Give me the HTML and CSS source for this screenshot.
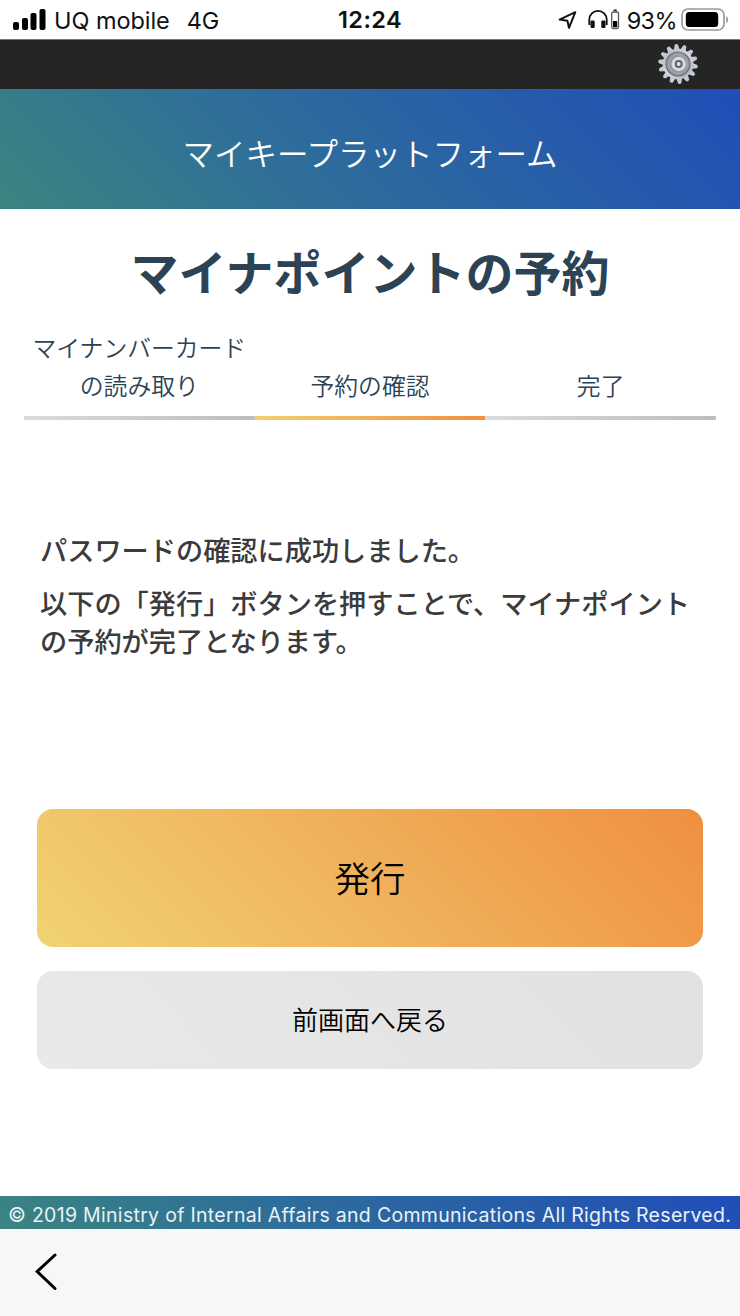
FILE: index.html
```html
<!DOCTYPE html>
<html lang="ja">
<head>
<meta charset="utf-8">
<meta name="viewport" content="width=device-width">
<title>マイナポイントの予約</title>
<link rel="stylesheet" href="styles.css">
</head>
<body>
<div class="screen">
  <div class="status">
    <div class="status-left">
      <svg class="signal" width="33" height="22" viewBox="0 0 33 22"><rect x="0" y="13" width="6" height="8" rx="2"/><rect x="9" y="9" width="6" height="12" rx="2"/><rect x="17.500" y="4" width="6" height="17" rx="2"/><rect x="26.500" y="0" width="6" height="21" rx="2"/></svg>
      <span class="carrier">UQ mobile</span>
      <span class="network">4G</span>
    </div>
    <div class="time">12:24</div>
    <div class="status-right">
      <svg class="location" width="20" height="20" viewBox="0 0 20 20"><path d="M1.600 9.600 17.300 2.200 11 17.800 9.400 10.800Z" fill="none" stroke="#111" stroke-width="2" stroke-linejoin="round"/></svg>
      <svg class="headphones" width="32" height="22" viewBox="0 0 32 22"><path d="M1.300 16V10.500a8.700 8.700 0 0 1 17.400 0V16" fill="none" stroke="#111" stroke-width="1.800"/><rect x="2.500" y="11.500" width="4.200" height="7.500" rx="1.300" fill="#111"/><rect x="13.300" y="11.500" width="4.200" height="7.500" rx="1.300" fill="#111"/><rect x="23.700" y="3" width="6.800" height="16.500" rx="1.500" fill="none" stroke="#555" stroke-width="1.300"/><path d="M25.500 1.300h3.200" stroke="#333" stroke-width="1.800"/><rect x="25" y="12" width="4.200" height="6.200" fill="#000"/></svg>
      <span class="percent">93%</span>
      <svg class="battery" width="48" height="24" viewBox="0 0 48 24"><rect x="1" y="1" width="42" height="21" rx="6" fill="#fff" stroke="#999" stroke-width="1.700"/><rect x="4.800" y="4" width="32.400" height="15" rx="3.500"/><path d="M45.200 8q2 1 2 3.500t-2 3.500z" fill="#999"/></svg>
    </div>
  </div>
  <div class="toolbar">
    <svg class="gear" width="42" height="42" viewBox="-21 -21 42 42">
      <defs>
        <linearGradient id="metal" x1="0" y1="0" x2="1" y2="1"><stop offset="0" stop-color="#aeb3bb"/><stop offset=".5" stop-color="#d5d9e1"/><stop offset="1" stop-color="#a9adb5"/></linearGradient>
        <path id="tooth" d="M-3.200-13-1.600-19.400Q0-20.500 1.600-19.400L3.200-13Z"/>
      </defs>
      <g fill="#c6cad2">
        <use href="#tooth" transform="rotate(-5)"/><use href="#tooth" transform="rotate(20.700)"/><use href="#tooth" transform="rotate(46.400)"/><use href="#tooth" transform="rotate(72.100)"/><use href="#tooth" transform="rotate(97.900)"/><use href="#tooth" transform="rotate(123.600)"/><use href="#tooth" transform="rotate(149.300)"/><use href="#tooth" transform="rotate(175)"/><use href="#tooth" transform="rotate(200.700)"/><use href="#tooth" transform="rotate(226.400)"/><use href="#tooth" transform="rotate(252.100)"/><use href="#tooth" transform="rotate(277.900)"/><use href="#tooth" transform="rotate(303.600)"/><use href="#tooth" transform="rotate(329.300)"/>
      </g>
      <circle r="15.300" fill="url(#metal)"/>
      <circle r="12" fill="#92969d" stroke="#6c7077" stroke-width="1.200"/>
      <circle r="9.500" fill="none" stroke="#a9aeb5" stroke-width="1"/>
      <circle cx=".7" r="7.200" fill="#d6dae1"/>
      <circle cx=".7" r="4" fill="#5f6369"/>
      <circle cx=".7" r="2" fill="#e4e6ea"/>
    </svg>
  </div>
  <header class="banner">マイキープラットフォーム</header>
  <main class="content">
    <h1 class="title">マイナポイントの予約</h1>
    <ol class="steps">
      <li class="step"><span>マイナンバーカード<br>の読み取り</span></li>
      <li class="step active"><span>予約の確認</span></li>
      <li class="step"><span>完了</span></li>
    </ol>
    <div class="message">
      <p>パスワードの確認に成功しました。</p>
      <p>以下の「発行」ボタンを押すことで、マイナポイント<br>の予約が完了となります。</p>
    </div>
    <div class="actions">
      <button class="button primary">発行</button>
      <button class="button secondary">前画面へ戻る</button>
    </div>
  </main>
  <footer class="copyright">© 2019 Ministry of Internal Affairs and Communications All Rights Reserved.</footer>
  <nav class="browser-bar">
    <svg width="22" height="38" viewBox="0 0 22 38"><path d="M20 2 2.200 18.500 20 35.500" fill="none" stroke="#000" stroke-width="3" stroke-linecap="round" stroke-linejoin="miter"/></svg>
  </nav>
</div>
</body>
</html>
```
FILE: styles.css
```css
* { box-sizing: border-box; }
body {
  margin: 0;
  background: #fff;
  font-family: "Noto Sans CJK JP", sans-serif;
  color: #2c4356;
}
.screen { display: flex; flex-direction: column; height: 1316px; width: 740px; overflow: hidden; }
.status {
  height: 39px;
  display: grid;
  grid-template-columns: 1fr auto 1fr;
  align-items: center;
  font: 23.500px/39px Inter, sans-serif;
  color: #111;
  white-space: nowrap;
}
.status-left, .status-right { display: flex; align-items: center; height: 39px; padding-top: 1px; }
.status-left { padding-left: 13px; }
.carrier { margin-left: 8px; letter-spacing: -.05px; }
.network { margin-left: 17px; letter-spacing: -.3px; }
.time { font-weight: 600; letter-spacing: .4px; }
.status-right { justify-content: flex-end; padding-right: 11px; }
.headphones { margin-left: 10px; }
.percent { margin-left: 7px; letter-spacing: -.6px; }
.battery { margin-left: 4px; margin-bottom: 1px; }
.toolbar {
  height: 50px;
  background: #252525;
  border-top: 1px solid #777;
  display: flex;
  justify-content: flex-end;
  align-items: flex-start;
  padding: 3px 41px 0 0;
}
.banner {
  height: 120px;
  background: linear-gradient(45deg, #3a8580, #2d6a9d 45%, #214db8);
  color: #fff;
  font-size: 31.500px;
  font-weight: 350;
  line-height: 127px;
  text-align: center;
}
.content { height: 987px; padding: 0 24px; }
.title {
  margin: 0;
  padding-top: 26px;
  height: 119px;
  font-size: 48px;
  line-height: 70px;
  font-weight: 700;
  text-align: center;
}
.steps { display: grid; grid-template-columns: repeat(3, 1fr); margin: 0; padding: 0; list-style: none; }
.step {
  height: 92px;
  display: flex;
  justify-content: center;
  align-items: flex-end;
  padding-bottom: 16px;
  font-size: 23.800px;
  font-weight: 350;
  line-height: 38px;
  text-align: center;
  white-space: nowrap;
  background: linear-gradient(90deg, #dbdbdb, #bdbdbd) bottom / 100% 4px no-repeat;
}
.step.active { background-image: linear-gradient(90deg, #f0d070, #ef9040); }
.message { padding: 110px 15px 0 16px; height: 389px; color: #3b3b3b; }
.message p { margin: 0 0 15px; font-size: 27.200px; line-height: 38px; font-weight: 500; white-space: nowrap; }
.actions { display: flex; flex-direction: column; gap: 24px; padding: 0 13px; }
.button {
  border: 0;
  border-radius: 16px;
  padding: 0 0 4px;
  font-family: inherit;
  font-weight: 350;
  color: #000;
}
.primary { height: 138px; font-size: 35.500px; padding-bottom: 3px; background: linear-gradient(45deg, #f1d374, #ef8f40); }
.secondary { height: 98px; font-size: 26px; background: linear-gradient(45deg, #e9e9e9, #e1e1e1); }
.copyright {
  height: 33px;
  background: linear-gradient(45deg, #3a8580, #2d6a9d 45%, #214db8);
  color: #e9f2f8;
  font: 19.500px/38px Inter, sans-serif;
  letter-spacing: .3px;
  padding-left: 8px;
  white-space: nowrap;
}
.browser-bar { height: 87px; background: #f7f7f7; padding: 24px 0 0 35px; }
```
